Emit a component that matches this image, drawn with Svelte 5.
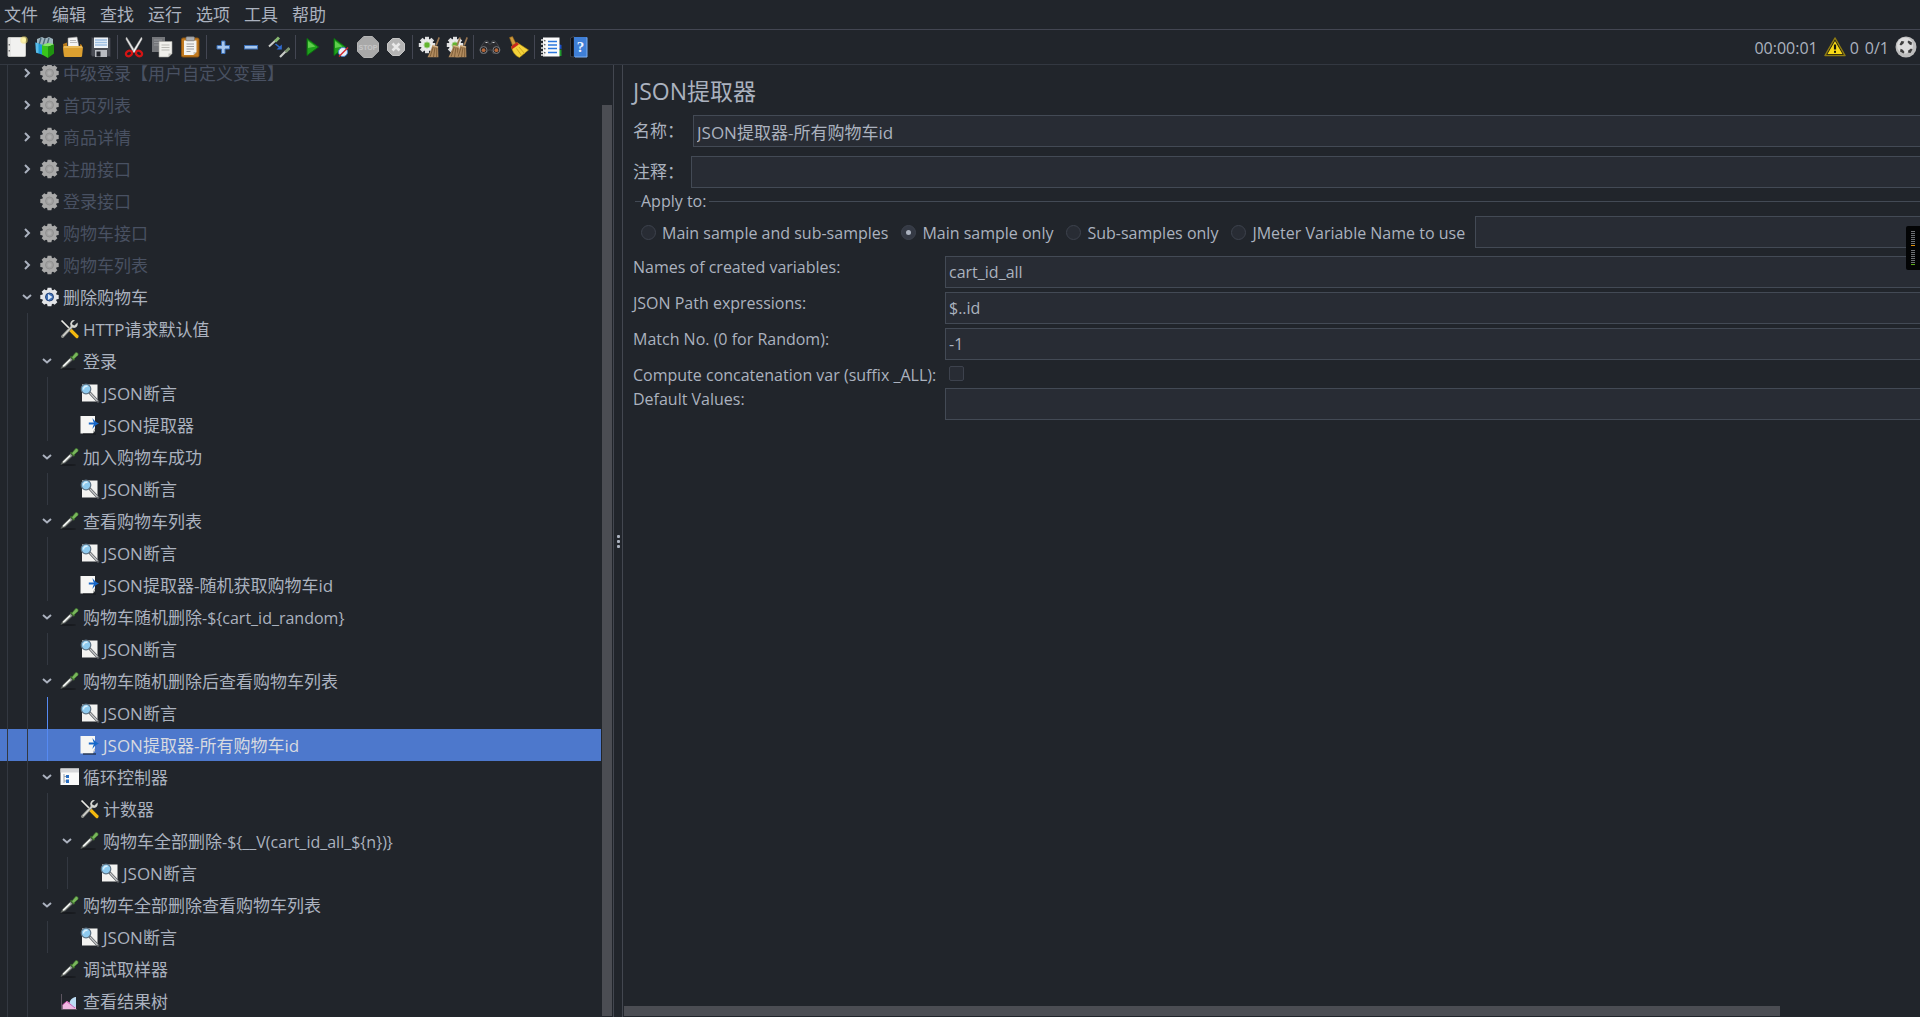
<script>
  const menus = ['文件', '编辑', '查找', '运行', '选项', '工具', '帮助'];

  const toolGroups = [
    [['new', '新建'], ['templates', '模板'], ['open', '打开'], ['save', '保存']],
    [['cut', '剪切'], ['copy', '复制'], ['paste', '粘贴']],
    [['plus', '展开'], ['minus', '折叠'], ['toggle', '切换']],
    [['play', '启动'], ['playnow', '不停顿启动'], ['stop', '停止'], ['shutdown', '关闭']],
    [['clear', '清除'], ['clearall', '清除全部']],
    [['search', '查找'], ['broom', '重置查找']],
    [['functions', '函数助手'], ['help', '帮助']]
  ];

  const rows = [
    { level: 0, arrow: 'closed', icon: 'gearoff', text: '中级登录【用户自定义变量】', off: true },
    { level: 0, arrow: 'closed', icon: 'gearoff', text: '首页列表', off: true },
    { level: 0, arrow: 'closed', icon: 'gearoff', text: '商品详情', off: true },
    { level: 0, arrow: 'closed', icon: 'gearoff', text: '注册接口', off: true },
    { level: 0, icon: 'gearoff', text: '登录接口', off: true },
    { level: 0, arrow: 'closed', icon: 'gearoff', text: '购物车接口', off: true },
    { level: 0, arrow: 'closed', icon: 'gearoff', text: '购物车列表', off: true },
    { level: 0, arrow: 'open', icon: 'gear', text: '删除购物车' },
    { level: 1, icon: 'tools', text: 'HTTP请求默认值' },
    { level: 1, arrow: 'open', icon: 'dropper', text: '登录' },
    { level: 2, icon: 'assert', text: 'JSON断言' },
    { level: 2, icon: 'extract', text: 'JSON提取器' },
    { level: 1, arrow: 'open', icon: 'dropper', text: '加入购物车成功' },
    { level: 2, icon: 'assert', text: 'JSON断言' },
    { level: 1, arrow: 'open', icon: 'dropper', text: '查看购物车列表' },
    { level: 2, icon: 'assert', text: 'JSON断言' },
    { level: 2, icon: 'extract', text: 'JSON提取器-随机获取购物车id' },
    { level: 1, arrow: 'open', icon: 'dropper', text: '购物车随机删除', expr: '-${cart_id_random}' },
    { level: 2, icon: 'assert', text: 'JSON断言' },
    { level: 1, arrow: 'open', icon: 'dropper', text: '购物车随机删除后查看购物车列表' },
    { level: 2, icon: 'assert', text: 'JSON断言', active: true },
    { level: 2, icon: 'extract', text: 'JSON提取器-所有购物车id', active: true, selected: true },
    { level: 1, arrow: 'open', icon: 'loop', text: '循环控制器' },
    { level: 2, icon: 'tools', text: '计数器' },
    { level: 2, arrow: 'open', icon: 'dropper', text: '购物车全部删除', expr: '-${__V(cart_id_all_${n})}' },
    { level: 3, icon: 'assert', text: 'JSON断言' },
    { level: 1, arrow: 'open', icon: 'dropper', text: '购物车全部删除查看购物车列表' },
    { level: 2, icon: 'assert', text: 'JSON断言' },
    { level: 1, icon: 'dropper', text: '调试取样器' },
    { level: 1, icon: 'results', text: '查看结果树' }
  ];

  const scopes = ['Main sample and sub-samples', 'Main sample only', 'Sub-samples only', 'JMeter Variable Name to use'];
  let scope = $state('Main sample only');

  let name = $state('JSON提取器-所有购物车id');
  let comment = $state('');
  let variable = $state('');
  let names = $state('cart_id_all');
  let path = $state('$..id');
  let match = $state('-1');
  let defaults = $state('');

  const teeth = [0, 45, 90, 135, 180, 225, 270, 315];
</script>

{#snippet broomHead(x)}
  <g transform="translate({x} 0)">
    <path d="M19.500 1l1.400.8-3 8-1.600-.7z" fill="#9a7650" />
    <path d="M13.500 9.200l5.600 1.600.3 10.400H8.500c1.800-3.500 3.500-7.500 5-12z" fill="#b08a5e" />
    <path d="M14.200 11l-3 9.500M16 11.500l-1.500 9.500M17.800 11.500l-.2 9.500" stroke="#74542f" stroke-width=".8" fill="none" />
    <path d="M13.400 9.500l5.700 1.600" stroke="#d9b88a" stroke-width="1.200" />
  </g>
{/snippet}

{#snippet toolIcon(kind)}
  <svg viewBox="0 0 22 22" width="22" height="22" aria-hidden="true">
    {#if kind === 'new'}
      <rect x="2" y="1.500" width="17.500" height="19" rx=".8" fill="#f1f1f0" stroke="#c9c9c6" />
      <path d="M4 2v18" stroke="#d8d8d6" />
      <path d="M3.300 8v1.500M3.300 14v1.500" stroke="#777" stroke-width="1.400" />
      <circle cx="18" cy="4" r="3.800" fill="#f6e26a" opacity=".55" />
      <circle cx="18" cy="4" r="2" fill="#fff6a8" />
    {:else if kind === 'templates'}
      <path d="M3 3l5-2 3 1.500 4-1.500 4 2v7H3z" fill="#9fb4be" />
      <path d="M7 2L5 9M11 2.500L9 9M15 2l-2 7" stroke="#4f6b78" stroke-width="1.400" />
      <path d="M1.500 6.500L9 9v10l-7-2.500z" fill="#1e9ad6" />
      <path d="M1.500 6.500l3 1v10l-2.500-1z" fill="#5cbbe6" />
      <path d="M8 9l6 1.500V22L8 18.500z" fill="#39c61c" />
      <path d="M14 10.500l6-2.500v9.500L14 22z" fill="#1f9310" />
      <path d="M8 9l6-2 6 1-6 2.500z" fill="#86e869" />
    {:else if kind === 'open'}
      <path d="M6 2l9-1 2 10H6z" fill="#f4f4f4" stroke="#9a9a9a" stroke-width=".6" />
      <path d="M8 4.500h6M8 6.500h7" stroke="#aaa" stroke-width=".8" />
      <path d="M1 8l4-1.500V11h13V8l2 1v11H2z" fill="#b87a1b" />
      <path d="M1 11l1-1h17.500l1.500 1-1 9.500-1 .5H3l-1-.5z" fill="#dca030" />
      <path d="M2 11h18" stroke="#f8d583" />
    {:else if kind === 'save'}
      <path d="M1.500 1.500h18l1 1v18h-18l-1.500-1.500z" fill="#4a4d55" stroke="#30323a" stroke-width=".8" />
      <rect x="4" y="1.500" width="14" height="10.500" fill="#eef3f8" />
      <path d="M5 4h12M5 6.500h12M5 9h12" stroke="#9dbfe2" stroke-width="1.300" />
      <rect x="5" y="14" width="12" height="7" fill="#b9bcc2" />
      <rect x="6.500" y="15.500" width="4" height="5" fill="#22252c" />
    {:else if kind === 'cut'}
      <path d="M3.500 1l9 14.500-2 1L2.800 3z" fill="#e8e8e8" stroke="#8e8e8e" stroke-width=".5" />
      <path d="M18.500 1L9.500 15.500l2 1L19.200 3z" fill="#f6f6f6" stroke="#8e8e8e" stroke-width=".5" />
      <ellipse cx="6" cy="17.500" rx="3.200" ry="2.600" fill="none" stroke="#d41414" stroke-width="2.300" transform="rotate(-28 6 17.500)" />
      <ellipse cx="16" cy="17.500" rx="3.200" ry="2.600" fill="none" stroke="#d41414" stroke-width="2.300" transform="rotate(28 16 17.500)" />
    {:else if kind === 'copy'}
      <rect x="1" y="1" width="13" height="15" fill="#74767a" />
      <path d="M3 4h8M3 6.500h8M3 9h6" stroke="#94969a" />
      <path d="M8 5.500h13v12L17.500 21H8z" fill="#f0f0ec" stroke="#a3a39e" stroke-width=".6" />
      <path d="M10.500 9h8M10.500 11.500h8M10.500 14h8" stroke="#b9b9b4" />
      <path d="M21 17.500h-3.500V21z" fill="#bdbdb8" />
    {:else if kind === 'paste'}
      <rect x="2.500" y="2" width="17.500" height="19" rx="1.500" fill="#c27a1f" stroke="#8c5410" />
      <path d="M5 4.500h12.500V16l-3 3H5z" fill="#f3f3f0" />
      <path d="M7.500 8h7.500M7.500 10.500h7.500M7.500 13h7.500M7.500 15.500h4" stroke="#9fa0a2" />
      <path d="M17.500 16h-3v3z" fill="#c2c2be" />
      <rect x="7" y=".8" width="8.500" height="4" rx="1" fill="#a9acb0" stroke="#6c6e72" stroke-width=".6" />
    {:else if kind === 'plus'}
      <path d="M9.500 5h3.500v4.500h4.500V13H13v4.500H9.500V13H5V9.500h4.500z" fill="#a8c8ee" stroke="#3a6eb5" />
    {:else if kind === 'minus'}
      <rect x="4.500" y="9.500" width="13" height="3.500" fill="#a8c8ee" stroke="#3a6eb5" />
    {:else if kind === 'toggle'}
      <path d="M1 10.500L8 4" stroke="#c9ccc8" stroke-width="2" />
      <path d="M7 5.500L11 1.500" stroke="#88b871" stroke-width="3" />
      <path d="M12 21l6-6" stroke="#c9ccc8" stroke-width="2.200" />
      <path d="M17.500 16l4-4" stroke="#7c9470" stroke-width="3" />
      <path d="M7.500 8l5 4" stroke="#2f6bd0" stroke-width="1.600" />
      <path d="M13.800 8.500v5H8.500z" fill="#2f6bd0" />
    {:else if kind === 'play'}
      <path d="M6 2.500L17.500 11 6 19.500z" fill="#1fa01c" stroke="#0c6d10" />
      <path d="M7 5l7.500 5.500L7 12z" fill="#5fce4d" />
    {:else if kind === 'playnow'}
      <path d="M5 2.500L16.500 11 5 19.500z" fill="#1fa01c" stroke="#0c6d10" />
      <path d="M6 5l7.500 5.500L6 12z" fill="#5fce4d" />
      <circle cx="14" cy="16" r="4.500" fill="#eaf0f8" stroke="#4a84cc" />
      <path d="M10 20.500l9-9" stroke="#d3252b" stroke-width="1.500" />
    {:else if kind === 'stop'}
      <path d="M6.700 .5h8.600l6.200 6.200v8.600l-6.200 6.200H6.700L.5 15.300V6.700z" fill="#a9a9a9" stroke="#b5b5b5" />
      <text x="11" y="13.500" text-anchor="middle" class="stop-word">STOP</text>
    {:else if kind === 'shutdown'}
      <path d="M7.500 2.500h7l5 5v7l-5 5h-7l-5-5v-7z" fill="#b4b4b4" stroke="#c4c4c4" />
      <path d="M7.500 7.500l7 7M14.500 7.500l-7 7" stroke="#e8e8e8" stroke-width="2.600" />
    {:else if kind === 'clear' || kind === 'clearall'}
      {#each teeth as a}
        <rect x="7" y=".8" width="4" height="5" fill="#dedfe0" transform="rotate({a} 9 9)" />
      {/each}
      <circle cx="9" cy="9" r="6.200" fill="#e9eaea" />
      <circle cx="9" cy="9" r="3" fill="#63b52f" stroke="#a6cf8d" />
      {#if kind === 'clearall'}
        {@render broomHead(-6)}
      {/if}
      {@render broomHead(1)}
    {:else if kind === 'search'}
      <path d="M3 9l3-4h3l1 3h2l1-3h3l3 4 2 5-2 3.500h-5L12.500 14h-3L7 17.500H2.500L.5 14z" fill="#2b2c30" stroke="#55575c" stroke-width=".6" />
      <circle cx="4.600" cy="14" r="3.400" fill="#1d1d20" stroke="#7c7e83" />
      <circle cx="17.400" cy="14" r="3.400" fill="#1d1d20" stroke="#7c7e83" />
      <circle cx="4.600" cy="14.200" r="1.900" fill="#b4673a" />
      <circle cx="17.400" cy="14.200" r="1.900" fill="#b4673a" />
      <path d="M6.500 6.500h2M13.500 6.500h2" stroke="#c9cbd0" />
    {:else if kind === 'broom'}
      <path d="M2.500 1.500l3-1 3.500 7-3.500 2z" fill="#cf9a3c" stroke="#8b6017" stroke-width=".6" />
      <path d="M4.500 10.500L10 6.500l11.500 7.500-9 7.500C8 20 5 15 4.500 10.500z" fill="#f4d23a" stroke="#b08c10" stroke-width=".6" />
      <path d="M4.300 10.200l5.700-4 1.800 2.300-6.800 4.800z" fill="#c8281c" />
      <path d="M9.500 12.500l5 7M12 11l5.500 6.500" stroke="#c9a41b" stroke-width=".9" />
    {:else if kind === 'functions'}
      <path d="M18 8l3.500 1v4L18 12.500z" fill="#1a50c8" />
      <path d="M18 14l3.500-.5V20H17z" fill="#1d9a2c" />
      <rect x="3" y="1.500" width="16.500" height="19" fill="#fbfbfb" />
      <path d="M8 5.500h9M8 9h9M8 12.500h9M8 16.500h9" stroke="#2b77dd" stroke-width="1.500" />
      <path d="M1 4h4M1 8h4M1 12h4M1 16h4M1 19h4" stroke="#e6e6e6" stroke-width="1.500" />
      <path d="M4 4.800h1.500M4 8.800h1.500M4 12.800h1.500M4 16.800h1.500" stroke="#333" />
    {:else if kind === 'help'}
      <path d="M2.500 2l3.500-1.500V21l-3.500-.5z" fill="#0d0f14" stroke="#50545c" stroke-width=".6" />
      <path d="M6 1h13v20H6z" fill="#3f7fd6" />
      <path d="M19 1.500V21H7" stroke="#7fb0f0" fill="none" />
      <text x="12.500" y="16" text-anchor="middle" class="help-mark">?</text>
    {/if}
  </svg>
{/snippet}

{#snippet treeIcon(kind)}
  <svg class="node-icon" viewBox="0 0 20 20" width="20" height="20" aria-hidden="true">
    {#if kind === 'gearoff' || kind === 'gear'}
      {@const on = kind === 'gear'}
      {#each teeth as a}
        <path d="M6.900 4L7.600.8h3.800l.7 3.200z" fill={on ? '#e4e6e9' : '#a9a9a9'} transform="rotate({a} 9.500 10)" />
      {/each}
      <circle cx="9.500" cy="10" r="7.400" fill={on ? '#e2e4e7' : '#a9a9a9'} />
      <circle cx="9.500" cy="10" r="4" fill={on ? '#3f70b4' : '#a0a0a0'} stroke={on ? '#27457a' : '#919191'} />
      {#if on}
        <path d="M8 7l4.500 3L8 13z" fill="#dbe8f8" />
      {:else}
        <circle cx="9.500" cy="10" r="2" fill="#aeaeae" />
      {/if}
    {:else if kind === 'tools'}
      <path d="M1.500 1.500L10 10" stroke="#e9e9e4" stroke-width="1.700" />
      <path d="M10 10.500l7 7" stroke="#f3b90f" stroke-width="3.200" stroke-linecap="round" />
      <path d="M2.500 17.500L12.500 7" stroke="#8a8c88" stroke-width="3" stroke-linecap="round" />
      <path d="M3 17L13 6.500" stroke="#d6d7d2" stroke-width="1.200" />
      <path d="M17.500 3.500l-3 3-2-.5-.5-2 3-3a4 4 0 0 0-4.500 5.500l2.500 2.300c3 .8 5.500-2 4.500-5.300z" fill="#d3d5d1" />
    {:else if kind === 'dropper'}
      <ellipse cx="8" cy="18" rx="8" ry="1" fill="#14161a" opacity=".7" />
      <path d="M.8 17.500L3 13.800l7.500-7.300 2.300 2.300-7.500 7z" fill="#8f948f" stroke="#4d514d" stroke-width=".7" />
      <path d="M3.200 15.300l7-6.800" stroke="#f7f9f7" stroke-width="1.500" />
      <path d="M10 5.800l1.300-1 3.700 3.800-1.200 1.200z" fill="#3d6f2c" />
      <path d="M11.800 6.300l3.700-4.500c1.200-1 3.500.8 2.400 2.400L13.700 8.200z" fill="#79b65c" stroke="#3f7a2c" stroke-width=".6" />
    {:else if kind === 'assert'}
      <path d="M2 1.500h15.500V17l-1 1.500H2z" fill="#f3f3f1" />
      <path d="M9.500 9.500l8.500 9" stroke="#55585c" stroke-width="2.600" stroke-linecap="round" />
      <path d="M10 10l7.500 8" stroke="#c8cacc" stroke-width="1.200" />
      <circle cx="6" cy="6" r="4.800" fill="#8ecbf0" stroke="#5d7284" stroke-width="1.200" />
      <path d="M3.500 6.500a3 3 0 0 1 4-3" stroke="#dff2fd" stroke-width="1.400" fill="none" />
    {:else if kind === 'extract'}
      <path d="M.5 1H15v12.500c-1.500 1.500-1.500 3.500-2 5H.5z" fill="#f6f6f4" />
      <path d="M15 13.500V16l-2 2.500c.5-1.500.5-3.500 2-5z" fill="#c8c8c4" />
      <path d="M3 19h13" stroke="#15171b" />
      <path d="M8.800 8.500H16" stroke="#1667c9" stroke-width="2" />
      <path d="M12.500 3c1.500 2.500 3.500 4.500 6.500 5.500-3 1-5 3-6.500 5.500.2-2 .8-4 2-5.500-1.200-1.500-1.800-3.500-2-5.500z" fill="#1667c9" />
    {:else if kind === 'loop'}
      <rect x=".5" y="1.500" width="18.500" height="16.500" fill="#fafafa" />
      <rect x=".5" y="1.500" width="18.500" height="4" fill="#d6d7da" />
      <path d="M4 7v9M4 9.500h3M4 14h3" stroke="#9aa2ac" />
      <rect x="6" y="8" width="3" height="3" fill="#2a6fc2" />
      <rect x="6" y="12.500" width="3" height="3.500" fill="#2a6fc2" />
    {:else if kind === 'results'}
      <path d="M1.500 3v15.500H17" stroke="#5d5560" fill="none" />
      <path d="M2.500 18v-4l4.500-4 3 2 3-4 3-2v12z" fill="#f0b9e2" />
      <path d="M9.500 12.500c0-3 2.500-6 6.500-6.500v9c-1 2-3 1.500-4 .5z" fill="#bcdcf4" />
      <path d="M2.500 14l4-3.500 3.500 2.500 5 4" stroke="#d04fb0" fill="none" stroke-width=".9" />
    {/if}
  </svg>
{/snippet}

<div class="app">
  <nav class="menubar">
    {#each menus as m}<button class="menu">{m}</button>{/each}
  </nav>

  <header class="toolbar">
    <div class="tools">
      {#each toolGroups as group, i}
        {#if i}<span class="sep"></span>{/if}
        {#each group as [kind, label]}
          <button class="tool" aria-label={label}>{@render toolIcon(kind)}</button>
        {/each}
      {/each}
    </div>
    <div class="status">
      <span>00:00:01</span>
      <button class="warn" aria-label="日志">
        <svg viewBox="0 0 22 20" width="22" height="20" aria-hidden="true">
          <path d="M11 1L21 18.500H1z" fill="#1b1a10" stroke="#8f7c12" stroke-width="1.500" stroke-linejoin="round" />
          <path d="M11 4l7.500 13h-15z" fill="#f7d917" />
          <path d="M11 7.500v5" stroke="#17160c" stroke-width="2.200" />
          <rect x="10" y="13.800" width="2" height="2" fill="#17160c" />
        </svg>
        <span>0</span>
      </button>
      <span>0/1</span>
      <svg viewBox="0 0 22 22" width="22" height="22" aria-hidden="true">
        <circle cx="11" cy="11" r="10.500" fill="#bdbdbd" />
        <circle cx="10" cy="9.500" r="8" fill="#dcdcdc" />
        <g fill="#3c3c3c">
          {#each [0, 90, 180, 270] as a}
            <path d="M4.500 8.500L6.500 5l2.800.6-1 2.200-2.300 1.700z" transform="rotate({a} 11 11)" />
          {/each}
        </g>
      </svg>
    </div>
  </header>

  <main class="split">
    <aside class="tree-pane">
      <ul class="tree">
        {#each rows as row}
          <li class="row" class:off={row.off} class:selected={row.selected}>
            {#each Array(row.level + 1) as _, g}
              <span class="guide" class:lit={row.active && g === row.level}></span>
            {/each}
            <span class="arrow">
              {#if row.arrow}
                <svg viewBox="0 0 12 12" width="12" height="12" aria-hidden="true">
                  <path d={row.arrow === 'open' ? 'M2 4l4 3.500 4-3.500' : 'M4 2l4 4-4 4'} fill="none" stroke="#abb2bf" stroke-width="2" />
                </svg>
              {/if}
            </span>
            {@render treeIcon(row.icon)}
            <span class="label">{row.text}{#if row.expr}<span class="expr">{row.expr}</span>{/if}</span>
          </li>
        {/each}
      </ul>
      <div class="vbar"><div class="vthumb"></div></div>
    </aside>

    <div class="divider"><i></i><i></i><i></i></div>

    <section class="editor">
      <form class="form">
        <h1>JSON提取器</h1>
        <div class="line named">
          <label for="name">名称：</label>
          <input id="name" type="text" bind:value={name} />
        </div>
        <div class="line">
          <label for="comment">注释：</label>
          <input id="comment" type="text" bind:value={comment} />
        </div>

        <fieldset>
          <legend>Apply to:</legend>
          <div class="scopes">
            {#each scopes as s}
              <label><input type="radio" name="scope" value={s} bind:group={scope} /><span class="label">{s}</span></label>
            {/each}
            <input type="text" aria-label="JMeter Variable Name" bind:value={variable} />
          </div>
        </fieldset>

        <div class="field">
          <label for="names">Names of created variables:</label>
          <input id="names" type="text" bind:value={names} />
        </div>
        <div class="field">
          <label for="path">JSON Path expressions:</label>
          <input id="path" type="text" bind:value={path} />
        </div>
        <div class="field">
          <label for="match">Match No. (0 for Random):</label>
          <input id="match" type="text" bind:value={match} />
        </div>
        <div class="field check">
          <label for="concat">Compute concatenation var (suffix _ALL):</label>
          <input id="concat" type="checkbox" />
        </div>
        <div class="field">
          <label for="defaults">Default Values:</label>
          <input id="defaults" type="text" bind:value={defaults} />
        </div>
      </form>
      <div class="hbar"><div class="hthumb"></div></div>
    </section>
  </main>

  <div class="meter">
    {#each ['amber', 'green'] as tone}
      <div class="bars">
        {#each Array(8) as _, i}<i class={i === 7 ? tone : ''}></i>{/each}
      </div>
    {/each}
  </div>
</div>

<style>
  :global(body) {
    background: #21252b;
  }

  .app {
    display: flex;
    flex-direction: column;
    height: 100vh;
    overflow: hidden;
    position: relative;
    background: #21252b;
    color: #abb2bf;
    font: 17px/22px 'Open Sans', 'Noto Sans CJK SC', sans-serif;
  }

  button {
    background: none;
    border: 0;
    padding: 0;
    color: inherit;
    font: inherit;
  }

  .menubar {
    display: flex;
    gap: 14px;
    padding: 4px 4px 3px;
    border-bottom: 1px solid #434652;
  }

  .toolbar {
    display: flex;
    justify-content: space-between;
    align-items: center;
    height: 34px;
    padding: 0 3px;
    border-bottom: 1px solid #333841;
    flex: none;
  }

  .tools,
  .status,
  .warn {
    display: flex;
    align-items: center;
  }

  .tool {
    display: grid;
    place-items: center;
    width: 28px;
    height: 30px;
  }

  .sep {
    width: 1px;
    height: 24px;
    margin: 0 2px;
    background: #434652;
  }

  .stop-word {
    font: bold 7px 'Liberation Sans', sans-serif;
    fill: #c6c6c6;
  }

  .help-mark {
    font: bold 15px 'Liberation Serif', serif;
    fill: #f0f6ff;
  }

  .status {
    gap: 6px;
    font-size: 16px;
  }

  .status span,
  .label {
    padding-top: 2px;
  }

  .warn {
    gap: 4px;
  }

  .split {
    display: flex;
    flex: 1;
    min-height: 0;
  }

  .tree-pane {
    display: flex;
    width: 613px;
    flex: none;
    overflow: hidden;
    border-right: 1px solid #434750;
  }

  .tree {
    flex: 1;
    margin: -8px 0 0 -3px;
    padding: 0;
    list-style: none;
  }

  .row {
    display: flex;
    align-items: center;
    height: 32px;
    white-space: nowrap;
  }

  .row.off {
    color: #495162;
  }

  .row.selected {
    background: #4d78cc;
    color: #d7dae0;
  }

  .expr {
    font-size: 16px;
  }

  .guide {
    display: flex;
    justify-content: center;
    align-self: stretch;
    width: 20px;
  }

  .guide::before {
    content: '';
    width: 1px;
    background: #333841;
  }

  .guide.lit::before {
    background: #568af2;
  }

  .arrow {
    display: grid;
    place-items: center;
    width: 20px;
  }

  .node-icon {
    margin: 0 3px;
  }

  .vbar {
    width: 12px;
    padding: 40px 1px 1px;
    box-sizing: border-box;
    display: flex;
  }

  .vthumb {
    flex: 1;
    background: #4b4d53;
  }

  .divider {
    display: flex;
    flex-direction: column;
    align-items: center;
    justify-content: center;
    gap: 2px;
    width: 8px;
    flex: none;
    border-right: 1px solid #434750;
  }

  .divider i {
    width: 3px;
    height: 3px;
    border-radius: 1px;
    background: #abb2bf;
  }

  .editor {
    display: flex;
    flex-direction: column;
    justify-content: space-between;
    flex: 1;
    min-width: 0;
    overflow: hidden;
  }

  .form {
    width: 112%;
    padding: 11px 10px 0;
    box-sizing: border-box;
  }

  h1 {
    margin: 0 0 9px;
    font-size: 23px;
    line-height: 30px;
    font-weight: 400;
  }

  .line {
    display: flex;
    align-items: center;
    margin-bottom: 9px;
  }

  .line label {
    width: 58px;
  }

  .named label {
    width: 60px;
  }

  input[type='text'] {
    flex: 1;
    min-width: 0;
    height: 32px;
    box-sizing: border-box;
    padding: 0 3px;
    border: 1px solid #434a55;
    background: #282c34;
    color: inherit;
    font: inherit;
    outline: 0;
  }

  .line:nth-of-type(2) {
    margin-bottom: 1px;
  }

  fieldset {
    min-width: 0;
    margin: 0 0 8px 2px;
    padding: 3px 0 0 6px;
    border: 0 solid #434a55;
    border-top-width: 1px;
    font-size: 16px;
  }

  legend {
    padding: 0 3px 0 0;
    line-height: 24px;
  }

  .scopes {
    display: flex;
    align-items: center;
  }

  .scopes label {
    display: flex;
    align-items: center;
    gap: 6px;
    margin-right: 13px;
    white-space: nowrap;
  }

  .scopes label:last-of-type {
    margin-right: 10px;
  }

  input[type='radio'],
  input[type='checkbox'] {
    appearance: none;
    display: grid;
    place-items: center;
    width: 15px;
    height: 15px;
    margin: 0;
    border: 1px solid #3d424d;
    border-radius: 50%;
    background: #282c34;
  }

  input[type='radio']:checked {
    background: #343944;
  }

  input[type='radio']:checked::before {
    content: '';
    width: 5px;
    height: 5px;
    border-radius: 50%;
    background: #abb2bf;
  }

  .field {
    display: flex;
    align-items: flex-start;
    margin-bottom: 4px;
    font-size: 16px;
  }

  .field label {
    width: 312px;
    flex: none;
    white-space: nowrap;
  }

  .check {
    height: 24px;
    margin: 0;
  }

  input[type='checkbox'] {
    margin: 2px 4px;
    border-radius: 2px;
  }

  .hbar {
    padding: 0 1px 1px;
  }

  .hthumb {
    width: calc(100% / 1.12);
    height: 10px;
    background: #4b4d53;
  }

  .meter {
    position: absolute;
    top: 226px;
    right: 0;
    display: flex;
    flex-direction: column;
    gap: 4px;
    width: 14px;
    padding: 5px;
    box-sizing: border-box;
    border-radius: 2px 0 0 2px;
    background: #030405;
  }

  .bars {
    display: grid;
    gap: 1px;
  }

  .bars i {
    height: 1px;
    background: #6f7276;
  }

  .bars .amber {
    background: #e0930f;
  }

  .bars .green {
    background: #5fae1c;
  }
</style>
